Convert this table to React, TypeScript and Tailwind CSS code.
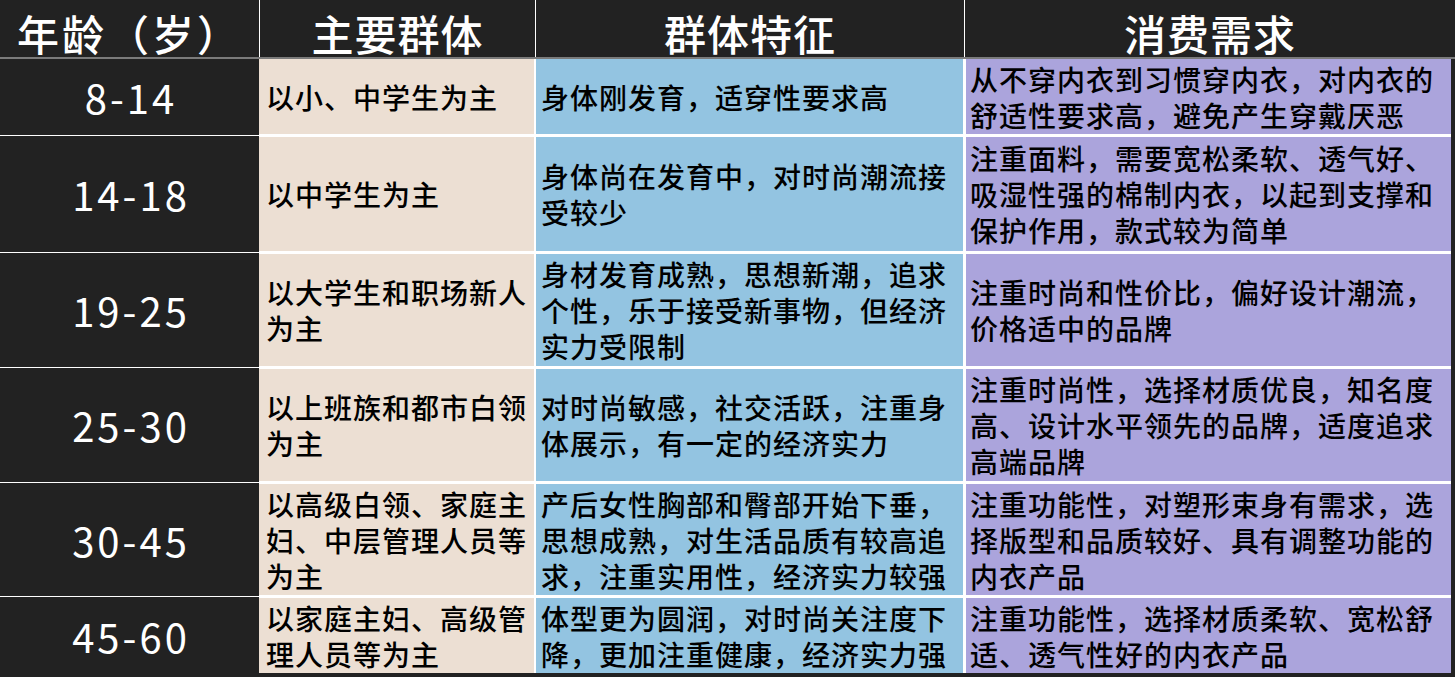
import React from "react";

type Row = { age: string; h: string; group: string[]; feat: string[]; need: string[] };

const rows: Row[] = [
  {
    age: "8-14",
    h: "h-[75px]",
    group: ["以小、中学生为主"],
    feat: ["身体刚发育，适穿性要求高"],
    need: ["从不穿内衣到习惯穿内衣，对内衣的", "舒适性要求高，避免产生穿戴厌恶"],
  },
  {
    age: "14-18",
    h: "h-[114px]",
    group: ["以中学生为主"],
    feat: ["身体尚在发育中，对时尚潮流接", "受较少"],
    need: ["注重面料，需要宽松柔软、透气好、", "吸湿性强的棉制内衣，以起到支撑和", "保护作用，款式较为简单"],
  },
  {
    age: "19-25",
    h: "h-[112px]",
    group: ["以大学生和职场新人", "为主"],
    feat: ["身材发育成熟，思想新潮，追求", "个性，乐于接受新事物，但经济", "实力受限制"],
    need: ["注重时尚和性价比，偏好设计潮流，", "价格适中的品牌"],
  },
  {
    age: "25-30",
    h: "h-[112px]",
    group: ["以上班族和都市白领", "为主"],
    feat: ["对时尚敏感，社交活跃，注重身", "体展示，有一定的经济实力"],
    need: ["注重时尚性，选择材质优良，知名度", "高、设计水平领先的品牌，适度追求", "高端品牌"],
  },
  {
    age: "30-45",
    h: "h-[111px]",
    group: ["以高级白领、家庭主", "妇、中层管理人员等", "为主"],
    feat: ["产后女性胸部和臀部开始下垂，", "思想成熟，对生活品质有较高追", "求，注重实用性，经济实力较强"],
    need: ["注重功能性，对塑形束身有需求，选", "择版型和品质较好、具有调整功能的", "内衣产品"],
  },
  {
    age: "45-60",
    h: "h-[75px]",
    group: ["以家庭主妇、高级管", "理人员等为主"],
    feat: ["体型更为圆润，对时尚关注度下", "降，更加注重健康，经济实力强"],
    need: ["注重功能性，选择材质柔软、宽松舒", "适、透气性好的内衣产品"],
  },
];

const font = { fontFamily: '"Noto Sans CJK SC", "Noto Sans", sans-serif' };

function Lines({ lines }: { lines: string[] }) {
  return (
    <div className="flex flex-col">
      {lines.map((l, i) => (
        <div key={i} className="whitespace-nowrap text-[28px] leading-[36px] tracking-[1px] font-medium text-black">
          {l}
        </div>
      ))}
    </div>
  );
}

function Separator() {
  return (
    <div className="flex h-[3px]">
      <div className="w-[259px] bg-[#222222] flex flex-col justify-center">
        <div className="h-px bg-white" />
      </div>
      <div className="w-[1192px] bg-white" />
      <div className="flex-1 bg-[#222222]" />
    </div>
  );
}

export default function App() {
  return (
    <div className="w-[1455px] h-[677px] bg-[#222222] overflow-hidden" style={font}>
      {/* header */}
      <div className="flex h-[57px] text-white text-[42px] leading-[42px] tracking-[1px] font-medium">
        <div className="w-[259px] flex justify-center pt-[12px] tracking-[3px]">年龄（岁）</div>
        <div className="w-px bg-white" />
        <div className="w-[275px] flex justify-center pt-[12px]">主要群体</div>
        <div className="w-px bg-white" />
        <div className="w-[428px] flex justify-center pt-[12px]">群体特征</div>
        <div className="w-px bg-white" />
        <div className="flex-1 flex justify-center pt-[12px]">消费需求</div>
      </div>
      <div className="h-[2px] bg-[#7b7b7b]" />
      {/* body */}
      <div className="flex flex-col">
        {rows.map((r, i) => (
          <React.Fragment key={r.age}>
            {i > 0 && <Separator />}
            <div className={`flex ${r.h}`}>
              <div className="w-[259px] bg-[#222222] flex items-center justify-center text-white text-[40px] leading-[40px] font-normal tracking-[3px] pl-[3px]">
                {r.age}
              </div>
              <div className="w-[275px] bg-[#ecdfd3] flex items-center pl-[7px]">
                <Lines lines={r.group} />
              </div>
              <div className="w-[2px] bg-white" />
              <div className="w-[427px] bg-[#93c4e1] flex items-center pl-[5px]">
                <Lines lines={r.feat} />
              </div>
              <div className="w-[3px] bg-white" />
              <div className="w-[485px] bg-[#aba4dc] flex items-center pl-[4px]">
                <Lines lines={r.need} />
              </div>
              <div className="flex-1 bg-[#222222]" />
            </div>
          </React.Fragment>
        ))}
      </div>
    </div>
  );
}
